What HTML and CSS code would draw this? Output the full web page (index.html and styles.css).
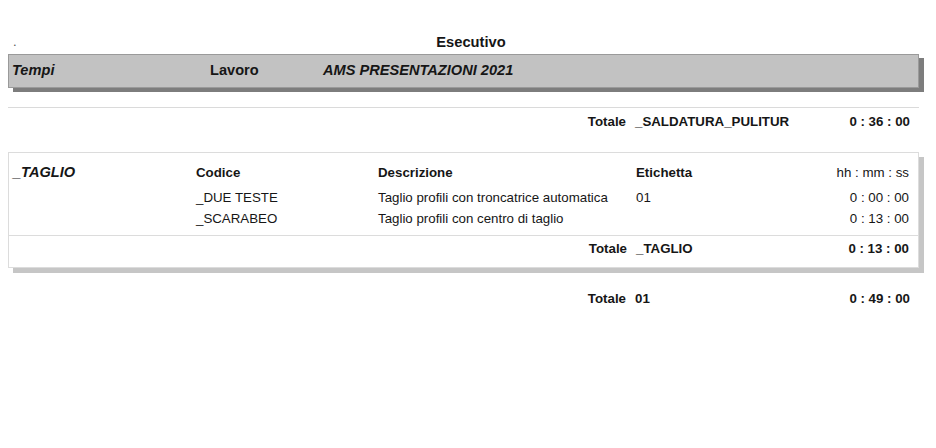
FILE: index.html
```html
<!DOCTYPE html>
<html lang="it">
<head>
<meta charset="utf-8">
<title>Esecutivo</title>
<link rel="stylesheet" href="styles.css">
</head>
<body>
<div class="page">
  <div class="title">
    <span class="dot">.</span>
    <span class="title-text">Esecutivo</span>
    <span></span>
  </div>
  <div class="bar">
    <span class="bar-tempi">Tempi</span>
    <span class="bar-lavoro">Lavoro</span>
    <span class="bar-name">AMS PRESENTAZIONI 2021</span>
  </div>
  <div class="rule"></div>
  <div class="grid total-row first-total">
    <span class="tot-label">Totale</span>
    <span class="tot-value">_SALDATURA_PULITUR</span>
    <span class="time">0 : 36 : 00</span>
  </div>
  <div class="box">
    <div class="grid head-row">
      <span class="group">_TAGLIO</span>
      <span class="th">Codice</span>
      <span class="th">Descrizione</span>
      <span class="th">Etichetta</span>
      <span class="time unit">hh : mm : ss</span>
    </div>
    <div class="grid data-row">
      <span></span>
      <span>_DUE TESTE</span>
      <span>Taglio profili con troncatrice automatica</span>
      <span>01</span>
      <span class="time plain">0 : 00 : 00</span>
    </div>
    <div class="grid data-row">
      <span></span>
      <span>_SCARABEO</span>
      <span>Taglio profili con centro di taglio</span>
      <span></span>
      <span class="time plain">0 : 13 : 00</span>
    </div>
    <div class="grid total-row box-total">
      <span class="tot-label">Totale</span>
      <span class="tot-value">_TAGLIO</span>
      <span class="time">0 : 13 : 00</span>
    </div>
  </div>
  <div class="grid total-row final-total">
    <span class="tot-label">Totale</span>
    <span class="tot-value">01</span>
    <span class="time">0 : 49 : 00</span>
  </div>
</div>
</body>
</html>
```
FILE: styles.css
```css
html, body {
  margin: 0;
  padding: 0;
  background: #ffffff;
}

.page {
  width: 911px;
  margin-left: 8px;
  padding-top: 32px;
  font-family: "Liberation Sans", Arial, sans-serif;
  font-size: 13.3px;
  color: #161616;
}

.title {
  display: grid;
  grid-template-columns: 1fr auto 1fr;
  align-items: baseline;
  height: 22px;
  line-height: 20px;
  padding-left: 15px;
}

.dot {
  margin-left: -10px;
  font-size: 13px;
  color: #555;
  position: relative;
  top: -1px;
}

.title-text {
  font-weight: bold;
  font-size: 14.7px;
}

.bar {
  display: flex;
  align-items: flex-start;
  height: 32px;
  border: 1px solid #9a9a9a;
  background: #c2c2c2;
  box-shadow: 5px 4px 0 #7d7d7d;
  font-weight: bold;
  font-size: 14.6px;
  line-height: 20px;
  padding-left: 3px;
  box-sizing: content-box;
}

.bar span {
  margin-top: 5px;
}

.bar-tempi {
  font-style: italic;
  width: 198px;
}

.bar-lavoro {
  width: 113px;
}

.bar-name {
  font-style: italic;
}

.rule {
  height: 1px;
  background: #dadada;
  margin-top: 19px;
}

.grid {
  display: grid;
  grid-template-columns: 183px 182px 258px 1fr auto;
  padding: 0 9px 0 4px;
  align-items: baseline;
}

.total-row {
  font-weight: bold;
  height: 20px;
  line-height: 20px;
}

.tot-label {
  grid-column: 1 / 4;
  text-align: right;
  padding-right: 9px;
}

.tot-value {
  grid-column: 4;
}

.time {
  grid-column: 5;
  text-align: right;
}

.first-total {
  margin-top: 4px;
}

.box {
  margin-top: 20px;
  border: 1px solid #dcdcdc;
  box-shadow: 5px 5px 0 #c6c6c6;
  background: #fff;
}

.head-row {
  line-height: 20px;
  padding-top: 9px;
  box-sizing: border-box;
  height: 35px;
}

.group {
  font-weight: bold;
  font-style: italic;
  font-size: 14.6px;
}

.th {
  font-weight: bold;
}

.unit {
  font-weight: normal;
}

.data-row {
  height: 20.5px;
  line-height: 20px;
}

.plain {
  font-weight: normal;
}

.box-total {
  border-top: 1px solid #dcdcdc;
  margin-top: 6px;
  padding-top: 3px;
  height: 32px;
  box-sizing: border-box;
}

.final-total {
  margin-top: 21px;
}
```
